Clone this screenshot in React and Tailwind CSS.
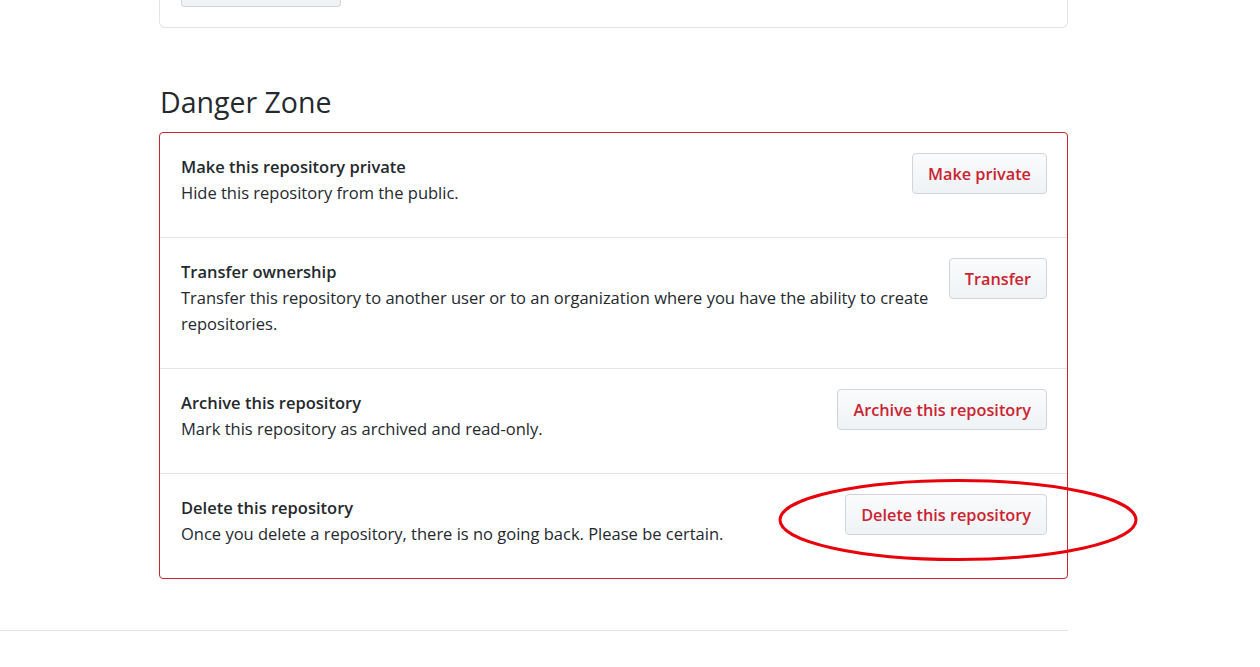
import React from "react";

const rows = [
  {
    title: "Make this repository private",
    desc: "Hide this repository from the public.",
    btn: "Make private",
  },
  {
    title: "Transfer ownership",
    desc: "Transfer this repository to another user or to an organization where you have the ability to create repositories.",
    btn: "Transfer",
  },
  {
    title: "Archive this repository",
    desc: "Mark this repository as archived and read-only.",
    btn: "Archive this repository",
  },
  {
    title: "Delete this repository",
    desc: "Once you delete a repository, there is no going back. Please be certain.",
    btn: "Delete this repository",
  },
];

export default function App() {
  return (
    <div
      className="relative w-[1260px] h-[667px] overflow-hidden bg-white text-[#24292e]"
      style={{ fontFamily: '"Open Sans", "Noto Sans", sans-serif' }}
    >
      <div className="ml-[159px] w-[909px]">
        <div className="h-[28px] border border-t-0 border-[#e1e4e8] rounded-b-[6px] pl-[21px]">
          <div className="h-[7px] w-[160px] border border-t-0 border-[#d1d5da] rounded-b-[4px] bg-[#eff3f6]" />
        </div>
        <h2 className="mt-[56px] mb-[12px] text-[28.5px] leading-[36px] font-normal pl-[1px]">
          Danger Zone
        </h2>
        <div className="border border-[#cb2431] rounded-[4px]">
          {rows.map((r, i) => (
            <div
              key={i}
              className={`flex items-start pl-[21px] pr-[20px] pt-[20px] pb-[22px] ${
                i > 0 ? "border-t border-[#e1e4e8]" : ""
              }`}
            >
              <div className="flex-1 min-w-0 pt-[1px] mb-[9px] text-[16.5px] leading-[26px]">
                <div className="font-semibold">{r.title}</div>
                <div className="text-[#24292e]">{r.desc}</div>
              </div>
              <button className="ml-[12px] h-[41px] px-[15px] shrink-0 rounded-[4px] border border-[#d1d5da] bg-gradient-to-b from-[#fafbfc] to-[#eff3f6] text-[#cb2431] text-[16.3px] font-semibold leading-[24px]">
                {r.btn}
              </button>
            </div>
          ))}
        </div>
      </div>
      <div className="mt-[51px] w-[1068px] border-t border-[#e1e4e8]" />
      <svg
        className="absolute left-0 top-0 pointer-events-none"
        width="1260"
        height="667"
      >
        <ellipse
          cx="958"
          cy="520"
          rx="178"
          ry="39.5"
          fill="none"
          stroke="#e8000b"
          strokeWidth="3"
        />
      </svg>
    </div>
  );
}
